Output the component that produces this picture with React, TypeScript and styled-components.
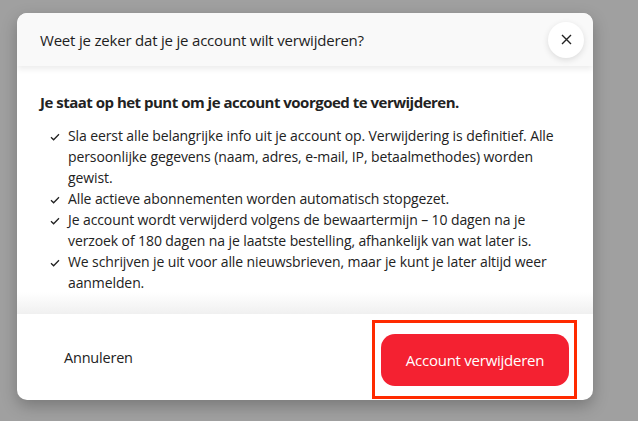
import styled, { createGlobalStyle } from "styled-components";

const GlobalStyle = createGlobalStyle`
  html, body {
    margin: 0;
    padding: 0;
    background: #a0a0a0;
    font-family: "Open Sans", "Noto Sans", sans-serif;
    color: #222;
  }
`;

const Backdrop = styled.div`
  width: 638px;
  height: 421px;
  padding: 13px 45px 0 17px;
  box-sizing: border-box;
  overflow: hidden;
`;

const Modal = styled.div`
  width: 576px;
  height: 387px;
  background: #fff;
  border-radius: 10px;
  overflow: hidden;
  display: flex;
  flex-direction: column;
  box-shadow: 0 6px 16px rgba(0, 0, 0, 0.25);
`;

const Header = styled.div`
  height: 53px;
  flex: none;
  background: #f9f9f9;
  display: flex;
  align-items: center;
  justify-content: space-between;
  padding: 0 9px 0 23px;
  box-shadow: 0 3px 6px rgba(0, 0, 0, 0.08);
  position: relative;
  z-index: 1;
`;

const Title = styled.h2`
  margin: 0;
  font-size: 15px;
  font-weight: 400;
  letter-spacing: -0.2px;
  color: #1e1e1e;
`;

const CloseButton = styled.button`
  width: 36px;
  height: 36px;
  border-radius: 50%;
  border: 0;
  background: #fff;
  box-shadow: 0 2px 6px rgba(0, 0, 0, 0.12);
  display: flex;
  align-items: center;
  justify-content: center;
  padding: 0;
  cursor: pointer;
`;

const Body = styled.div`
  flex: 1;
  padding: 26px 23px 0;
  position: relative;
  &::after {
    content: "";
    position: absolute;
    left: 0;
    right: 0;
    bottom: 0;
    height: 22px;
    background: linear-gradient(rgba(240, 240, 240, 0), rgba(240, 240, 240, 1));
  }
`;

const Lead = styled.p`
  margin: 0 0 13px;
  font-size: 15px;
  font-weight: 700;
  letter-spacing: -0.5px;
  line-height: 20px;
`;

const List = styled.ul`
  margin: 0;
  padding: 0 0 0 10px;
  list-style: none;
`;

const Item = styled.li`
  display: flex;
  gap: 6px;
  font-size: 14px;
  line-height: 21px;
  letter-spacing: -0.1px;
`;

const Check = styled.span`
  flex: none;
  width: 12px;
  height: 21px;
  display: flex;
  align-items: center;
  padding-top: 2px;
  box-sizing: border-box;
`;

const Footer = styled.div`
  height: 86px;
  flex: none;
  display: flex;
  align-items: center;
  justify-content: space-between;
  padding: 0 16px 0 47px;
`;

const TextButton = styled.button`
  border: 0;
  background: none;
  padding: 0;
  font-family: inherit;
  font-size: 14.5px;
  letter-spacing: -0.2px;
  color: #222;
  cursor: pointer;
`;

const Highlight = styled.div`
  border: 3px solid #ff2a00;
  padding: 11px 5px 10px 6px;
  margin-top: 4px;
`;

const DangerButton = styled.button`
  width: 188px;
  height: 52px;
  border: 0;
  border-radius: 14px;
  background: #f42131;
  color: #fff;
  font-family: inherit;
  font-size: 15px;
  letter-spacing: -0.25px;
  cursor: pointer;
  display: block;
`;

const items = [
  "Sla eerst alle belangrijke info uit je account op. Verwijdering is definitief. Alle persoonlijke gegevens (naam, adres, e-mail, IP, betaalmethodes) worden gewist.",
  "Alle actieve abonnementen worden automatisch stopgezet.",
  "Je account wordt verwijderd volgens de bewaartermijn – 10 dagen na je verzoek of 180 dagen na je laatste bestelling, afhankelijk van wat later is.",
  "We schrijven je uit voor alle nieuwsbrieven, maar je kunt je later altijd weer aanmelden.",
];

function CheckIcon() {
  return (
    <svg width="10" height="8" viewBox="0 0 10 8" fill="none">
      <path d="M1 4.2 L3.6 6.8 L9 1.2" stroke="#222" strokeWidth="1.3" />
    </svg>
  );
}

export default function App() {
  return (
    <>
      <GlobalStyle />
      <Backdrop>
        <Modal>
          <Header>
            <Title>Weet je zeker dat je je account wilt verwijderen?</Title>
            <CloseButton aria-label="Sluiten">
              <svg width="11" height="11" viewBox="0 0 11 11">
                <path d="M1 1 L10 10 M10 1 L1 10" stroke="#222" strokeWidth="1.4" />
              </svg>
            </CloseButton>
          </Header>
          <Body>
            <Lead>Je staat op het punt om je account voorgoed te verwijderen.</Lead>
            <List>
              {items.map((text) => (
                <Item key={text}>
                  <Check>
                    <CheckIcon />
                  </Check>
                  <span>{text}</span>
                </Item>
              ))}
            </List>
          </Body>
          <Footer>
            <TextButton>Annuleren</TextButton>
            <Highlight>
              <DangerButton>Account verwijderen</DangerButton>
            </Highlight>
          </Footer>
        </Modal>
      </Backdrop>
    </>
  );
}
